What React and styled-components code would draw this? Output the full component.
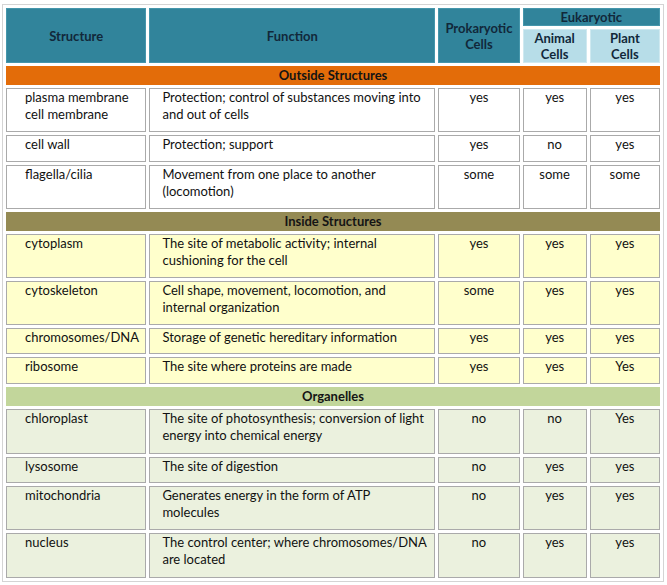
import React from "react";
import styled, { createGlobalStyle } from "styled-components";

const GlobalStyle = createGlobalStyle`
  body {
    margin: 0;
    background: #fff;
    font-family: Lato, "Open Sans", sans-serif;
  }
`;

const Frame = styled.div`
  padding: 4px 0 0 2px;
`;

const Table = styled.table`
  width: 662px;
  table-layout: fixed;
  border-collapse: separate;
  border-spacing: 3px;
  border: 1px solid #d4d4d4;
  font-size: 13px;
  line-height: 17px;
  color: #111;
`;

const Head = styled.th`
  background: ${(p) => (p.$light ? "#b7dde8" : "#31849b")};
  border: 1px solid ${(p) => (p.$light ? "#cfe9f0" : "#4596ab")};
  color: #11283a;
  font-weight: 700;
  line-height: 16px;
  text-align: center;
  vertical-align: middle;
  padding: 0 2px;
  box-sizing: border-box;
`;

const bandColors = {
  outside: "#e36c09",
  inside: "#948a54",
  organelles: "#c2d69b",
};

const rowColors = {
  outside: "#ffffff",
  inside: "#ffffcc",
  organelles: "#ebf1de",
};

const Band = styled.td`
  background: ${(p) => bandColors[p.$kind]};
  border: 1px solid ${(p) => bandColors[p.$kind]};
  color: #141414;
  font-weight: 700;
  text-align: center;
  vertical-align: middle;
  padding: 0;
`;

const Cell = styled.td`
  background: ${(p) => rowColors[p.$kind]};
  border: 1px solid #aaa;
  vertical-align: top;
  padding: 0 2px 0 ${(p) => p.$indent || 2}px;
  text-align: ${(p) => (p.$center ? "center" : "left")};
  box-sizing: border-box;
`;

const Row = styled.tr`
  height: ${(p) => p.$h}px;
`;

const sections = [
  {
    kind: "outside",
    title: "Outside Structures",
    rows: [
      ["plasma membrane\ncell membrane", "Protection; control of substances moving  into\nand out of cells", "yes", "yes", "yes", 44],
      ["cell wall", "Protection; support", "yes", "no", "yes", 27],
      ["flagella/cilia", "Movement from one place to another\n(locomotion)", "some", "some", "some", 44],
    ],
  },
  {
    kind: "inside",
    title: "Inside Structures",
    rows: [
      ["cytoplasm", "The site of metabolic activity; internal\ncushioning for the cell", "yes", "yes", "yes", 44],
      ["cytoskeleton", "Cell shape, movement, locomotion,  and\ninternal organization", "some", "yes", "yes", 44],
      ["chromosomes/DNA", "Storage of genetic hereditary information", "yes", "yes", "yes", 26],
      ["ribosome", "The site where proteins are made", "yes", "yes", "Yes", 27],
    ],
  },
  {
    kind: "organelles",
    title: "Organelles",
    rows: [
      ["chloroplast", "The site of photosynthesis; conversion  of light\nenergy into chemical energy", "no", "no", "Yes", 45],
      ["lysosome", "The site of digestion", "no", "yes", "yes", 26],
      ["mitochondria", "Generates energy in the form of ATP\nmolecules", "no", "yes", "yes", 44],
      ["nucleus", "The control center; where chromosomes/DNA\nare located", "no", "yes", "yes", 45],
    ],
  },
];

const Lines = ({ text }) =>
  text.split("\n").map((line, i) => (
    <React.Fragment key={i}>
      {i > 0 && <br />}
      {line}
    </React.Fragment>
  ));

export default function App() {
  return (
    <>
      <GlobalStyle />
      <Frame>
        <Table>
          <colgroup>
            <col style={{ width: 140 }} />
            <col style={{ width: 285 }} />
            <col style={{ width: 81 }} />
            <col style={{ width: 64 }} />
            <col style={{ width: 70 }} />
          </colgroup>
          <thead>
            <Row $h={18}>
              <Head rowSpan={2}>Structure</Head>
              <Head rowSpan={2}>Function</Head>
              <Head rowSpan={2}>
                Prokaryotic
                <br />
                Cells
              </Head>
              <Head colSpan={2}>Eukaryotic</Head>
            </Row>
            <Row $h={34}>
              <Head $light>
                Animal
                <br />
                Cells
              </Head>
              <Head $light>
                Plant
                <br />
                Cells
              </Head>
            </Row>
          </thead>
          <tbody>
            {sections.map((s) => (
              <React.Fragment key={s.kind}>
                <Row $h={19}>
                  <Band colSpan={5} $kind={s.kind}>
                    {s.title}
                  </Band>
                </Row>
                {s.rows.map(([name, fn, pro, animal, plant, h]) => (
                  <Row key={name} $h={h}>
                    <Cell $kind={s.kind} $indent={18}>
                      <Lines text={name} />
                    </Cell>
                    <Cell $kind={s.kind} $indent={12}>
                      <Lines text={fn} />
                    </Cell>
                    <Cell $kind={s.kind} $center>
                      {pro}
                    </Cell>
                    <Cell $kind={s.kind} $center>
                      {animal}
                    </Cell>
                    <Cell $kind={s.kind} $center>
                      {plant}
                    </Cell>
                  </Row>
                ))}
              </React.Fragment>
            ))}
          </tbody>
        </Table>
      </Frame>
    </>
  );
}
